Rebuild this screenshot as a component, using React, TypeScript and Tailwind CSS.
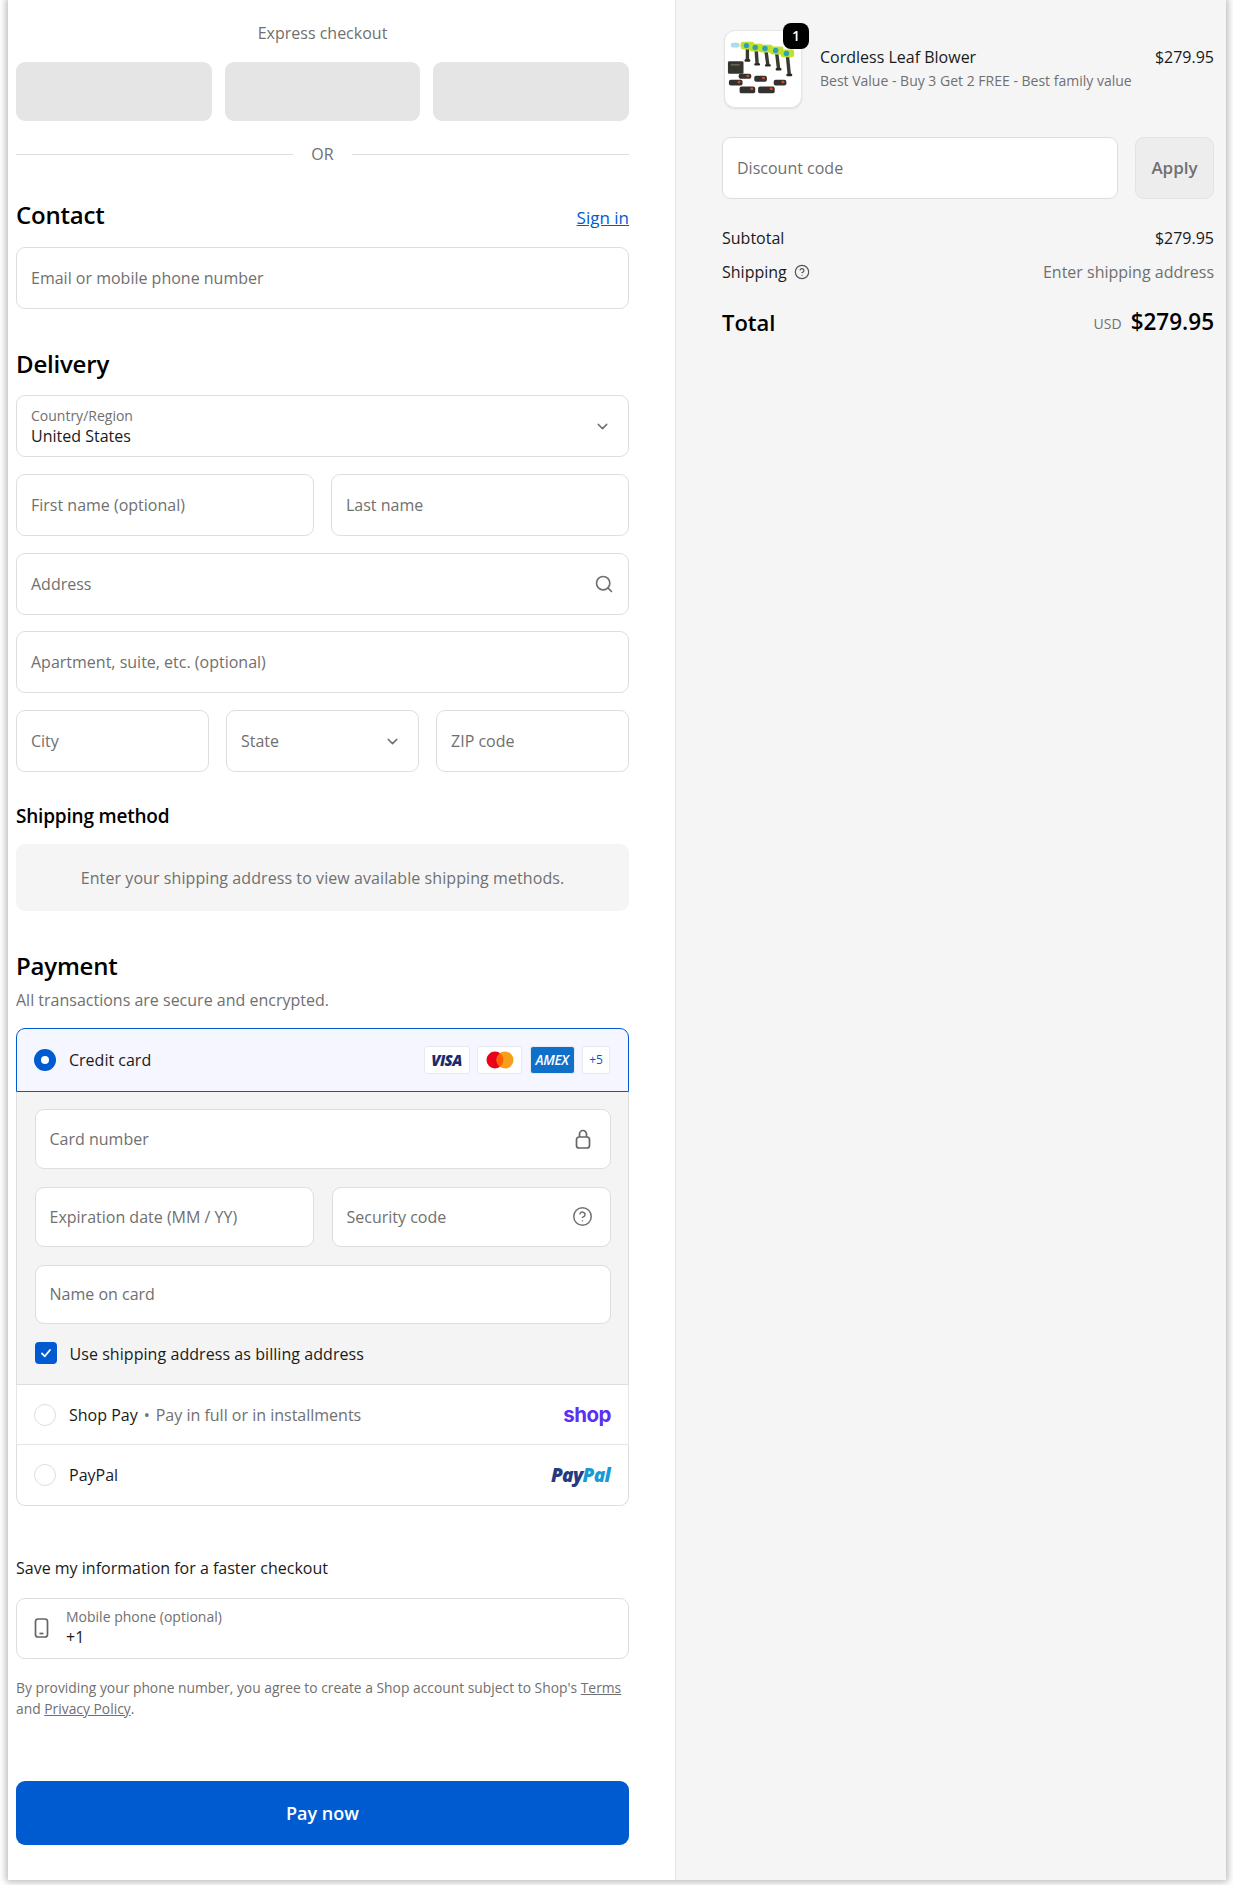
import React from 'react';
import { ChevronDown, Search, CircleHelp } from 'lucide-react';

const fieldBase =
	'flex items-center justify-between rounded-[9px] border border-[#dedede] bg-white text-[#707070]';

function Field({
	label,
	className,
	icon,
}: {
	label: string;
	className: string;
	icon?: React.ReactNode;
}) {
	return (
		<div className={`${fieldBase} ${className}`}>
			<span>{label}</span>
			{icon}
		</div>
	);
}

function Heading({ children }: { children: React.ReactNode }) {
	return (
		<h2 className="h-[30px] text-[24px] leading-[28px] font-semibold tracking-[-0.2px] text-black">
			{children}
		</h2>
	);
}

function Radio() {
	return (
		<span className="h-[22px] w-[22px] shrink-0 rounded-full border border-[#dedede] bg-white" />
	);
}

function CardBadge({
	className,
	children,
}: {
	className: string;
	children: React.ReactNode;
}) {
	return (
		<span
			className={`flex h-[28px] items-center justify-center rounded-[3px] border border-[#e8eaf2] ${className}`}
		>
			{children}
		</span>
	);
}

function LockIcon() {
	return (
		<svg width="18" height="20" viewBox="0 0 18 20" fill="none" stroke="#666666" strokeWidth="1.7">
			<rect x="2.5" y="8" width="13" height="11" rx="2.6" />
			<path d="M5.5 8V5a3.5 3.5 0 0 1 7 0v3" />
		</svg>
	);
}

function PhoneIcon() {
	return (
		<svg width="15" height="20" viewBox="0 0 15 20" fill="none" stroke="#666666" strokeWidth="1.7">
			<rect x="1.5" y="1" width="12" height="18" rx="2.6" />
			<path d="M5.5 15.5h4" />
		</svg>
	);
}

const drills = [
	{ hx: 23, hy: 17, bx: 23, by: 30 },
	{ hx: 32, hy: 19, bx: 33, by: 34 },
	{ hx: 42, hy: 20, bx: 44, by: 35 },
	{ hx: 53, hy: 22, bx: 55, by: 39 },
	{ hx: 64, hy: 25, bx: 66, by: 45 },
];

const batteries = [
	[14, 44, 13, 5],
	[30, 46, 13, 6],
	[50, 50, 13, 6],
	[4, 50, 14, 6],
	[15, 57, 16, 7],
	[34, 57, 17, 7],
];

// rough drawing of the product photo: five drills, a case and batteries
function ProductImage() {
	return (
		<svg width="76" height="76" viewBox="0 0 78 78" className="blur-[0.4px]">
			<rect x="6" y="12" width="9" height="5" rx="2" fill="#a9dcec" />
			{drills.map((d) => (
				<g key={d.hx}>
					<path d={`M${d.hx} ${d.hy}L${d.bx} ${d.by}`} stroke="#3a3a32" strokeWidth="3.5" />
					<rect x={d.bx - 3} y={d.by - 1} width="6" height="2.5" rx="1" fill="#2a2a24" />
					<rect x={d.hx - 7} y={d.hy - 6} width="14" height="8" rx="2.5" fill="#bfe02c" />
					<circle cx={d.hx - 1} cy={d.hy - 2} r="2.8" fill="#2f9fb4" />
				</g>
			))}
			<rect x="3" y="31" width="16" height="13" rx="1.5" fill="#35342f" />
			<rect x="6" y="34" width="9" height="1.5" fill="#6e6a4e" />
			{batteries.map(([x, y, w, h]) => (
				<g key={`${x}-${y}`}>
					<rect x={x} y={y} width={w} height={h} rx="2" fill="#33322f" />
					<rect x={x + w - 5} y={y + 1} width="3" height="2.5" rx="1" fill="#d34c2a" />
				</g>
			))}
		</svg>
	);
}

export default function App() {
	return (
		<div className="h-[1885px] w-full bg-white pr-[7px] pb-[5px] pl-[8px] font-['Open_Sans','Liberation_Sans',sans-serif] text-[16px] leading-[24px] text-[#1a1a1a]">
			<div className="flex h-[1880px] bg-white shadow-[0_0_7px_2px_rgba(0,0,0,0.28)]">
				{/* left column */}
				<div className="w-[668px] shrink-0 border-r border-[#e6e6e6] pt-[21px] pl-[8px]">
					<div className="w-[613px]">
						<p className="h-[24px] text-center text-[#707070]">Express checkout</p>
						<div className="mt-[17px] grid grid-cols-3 gap-[13px]">
							<div className="h-[59px] rounded-[9px] bg-[#e5e5e5]" />
							<div className="h-[59px] rounded-[9px] bg-[#e5e5e5]" />
							<div className="h-[59px] rounded-[9px] bg-[#e5e5e5]" />
						</div>
						<div className="mt-[21px] flex h-[24px] items-center justify-between text-[#707070]">
							<span className="h-px w-[277px] bg-[#dedede]" />
							<span>OR</span>
							<span className="h-px w-[277px] bg-[#dedede]" />
						</div>

						<div className="mt-[35px] flex items-center justify-between">
							<Heading>Contact</Heading>
							<a className="mt-[4px] text-[17px] text-[#005bd1] underline">Sign in</a>
						</div>
						<Field label="Email or mobile phone number" className="mt-[16px] h-[62px] px-[14px]" />

						<div className="mt-[41px]">
							<Heading>Delivery</Heading>
						</div>
						<div className="mt-[15px] flex flex-col gap-[16.75px]">
							<div className={`${fieldBase} h-[62px] pr-[17px] pl-[14px]`}>
								<div className="flex flex-col">
									<span className="text-[14px] leading-[19px]">Country/Region</span>
									<span className="leading-[22px] text-[#1a1a1a]">United States</span>
								</div>
								<ChevronDown size={17} strokeWidth={2} />
							</div>
							<div className="grid grid-cols-2 gap-[17px]">
								<Field label="First name (optional)" className="h-[62px] px-[14px]" />
								<Field label="Last name" className="h-[62px] px-[14px]" />
							</div>
							<Field
								label="Address"
								className="h-[62px] pr-[14px] pl-[14px]"
								icon={<Search size={20} strokeWidth={2} />}
							/>
							<Field label="Apartment, suite, etc. (optional)" className="h-[62px] px-[14px]" />
							<div className="grid grid-cols-3 gap-[17px]">
								<Field label="City" className="h-[62px] px-[14px]" />
								<Field
									label="State"
									className="h-[62px] pr-[17px] pl-[14px]"
									icon={<ChevronDown size={17} strokeWidth={2} />}
								/>
								<Field label="ZIP code" className="h-[62px] px-[14px]" />
							</div>
						</div>

						<h3 className="mt-[32px] h-[26px] text-[19px] leading-[24px] font-semibold tracking-[-0.2px] text-black">
							Shipping method
						</h3>
						<div className="mt-[14px] flex h-[67px] items-center justify-center rounded-[9px] bg-[#f5f5f5] tracking-[0.08px] text-[#707070]">
							Enter your shipping address to view available shipping methods.
						</div>

						<div className="mt-[41px]">
							<Heading>Payment</Heading>
						</div>
						<p className="mt-[6px] text-[#707070]">All transactions are secure and encrypted.</p>

						{/* payment methods */}
						<div className="mt-[16px]">
							<div className="flex h-[64px] items-center rounded-t-[9px] border border-[#005bd1] bg-[#f5f6ff] pr-[18px] pl-[17px]">
								<span className="flex h-[22px] w-[22px] items-center justify-center rounded-full bg-[#005bd1]">
									<span className="h-[8px] w-[8px] rounded-full bg-white" />
								</span>
								<span className="ml-[13px]">Credit card</span>
								<div className="ml-auto flex gap-[7.5px]">
									<CardBadge className="w-[46px] bg-white">
										<span className="text-[15px] font-extrabold tracking-[-0.6px] text-[#1a2b6d] italic">
											VISA
										</span>
									</CardBadge>
									<CardBadge className="w-[45px] bg-white">
										<svg width="28" height="18" viewBox="0 0 28 18">
											<circle cx="9" cy="9" r="8.5" fill="#eb001b" />
											<circle cx="19" cy="9" r="8.5" fill="#f79e1b" />
											<path d="M14 2.2a8.5 8.5 0 0 1 0 13.6a8.5 8.5 0 0 1 0-13.6z" fill="#ff5f00" />
										</svg>
									</CardBadge>
									<CardBadge className="w-[45px] border-[#0f70c9] bg-[#0f70c9]">
										<span className="text-[13.5px] font-semibold tracking-[-0.4px] text-white italic">
											AMEX
										</span>
									</CardBadge>
									<CardBadge className="w-[28px] bg-white">
										<span className="text-[12px] text-[#005bd1]">+5</span>
									</CardBadge>
								</div>
							</div>
							<div className="border-x border-b border-[#dedede] bg-[#f4f4f4] px-[17.5px] pt-[17px]">
								<div className="flex flex-col gap-[18px]">
									<Field
										label="Card number"
										className="h-[59.5px] pr-[18px] pl-[14px]"
										icon={<LockIcon />}
									/>
									<div className="grid grid-cols-2 gap-[18px]">
										<Field label="Expiration date (MM / YY)" className="h-[60px] px-[14px]" />
										<Field
											label="Security code"
											className="h-[60px] pr-[17px] pl-[14px]"
											icon={<CircleHelp size={21} strokeWidth={1.7} />}
										/>
									</div>
									<Field label="Name on card" className="h-[59.5px] px-[14px]" />
								</div>
								<div className="flex h-[60px] items-center pb-[2px]">
									<span className="flex h-[22px] w-[22px] items-center justify-center rounded-[4px] bg-[#005bd1]">
										<svg width="14" height="14" viewBox="0 0 14 14" fill="none" stroke="white" strokeWidth="1.8" strokeLinecap="round" strokeLinejoin="round">
											<path d="M3 7.5l2.8 2.8L11 4" />
										</svg>
									</span>
									<span className="mt-[2px] ml-[13px] tracking-[0.06px]">
										Use shipping address as billing address
									</span>
								</div>
							</div>
							<div className="flex h-[60px] items-center border-x border-b border-[#e6e6e6] pr-[17px] pl-[17px]">
								<Radio />
								<span className="ml-[13px]">Shop Pay</span>
								<span className="ml-[6px] text-[#707070]">•</span>
								<span className="ml-[6px] text-[#707070]">Pay in full or in installments</span>
								<span className="ml-auto font-['Inter',sans-serif] text-[20.5px] leading-[24px] font-bold tracking-[-0.5px] text-[#5a31f4]">
									shop
								</span>
							</div>
							<div className="flex h-[60.5px] items-center rounded-b-[9px] border-x border-b border-[#dedede] pr-[18px] pl-[17px]">
								<Radio />
								<span className="ml-[13px]">PayPal</span>
								<span className="ml-auto text-[19px] font-extrabold tracking-[-0.7px] italic">
									<span className="text-[#253b80]">Pay</span>
									<span className="text-[#179bd7]">Pal</span>
								</span>
							</div>
						</div>

						<p className="mt-[50.5px]">Save my information for a faster checkout</p>
						<div className="mt-[18px] flex h-[60.5px] items-center rounded-[9px] border border-[#dedede] bg-white pl-[17px]">
							<PhoneIcon />
							<div className="ml-[17px] flex flex-col">
								<span className="text-[14px] leading-[18px] text-[#707070]">
									Mobile phone (optional)
								</span>
								<span className="leading-[23px]">+1</span>
							</div>
						</div>
						<p className="mt-[18px] text-[13.85px] leading-[21px] text-[#707070]">
							By providing your phone number, you agree to create a Shop account subject to Shop's{' '}
							<a className="underline">Terms</a>
							<br />
							and <a className="underline">Privacy Policy</a>.
						</p>
						<button className="mt-[62.5px] flex h-[64px] w-full items-center justify-center rounded-[9px] bg-[#005bd1] text-[18px] font-semibold text-white">
							Pay now
						</button>
					</div>
				</div>

				{/* order summary */}
				<div className="flex-1 bg-[#f5f5f5] pt-[23px] pr-[12px] pl-[46px]">
					<div className="flex items-start">
						<div className="relative mt-[7px] ml-[2px] flex h-[78px] w-[78px] shrink-0 items-center justify-center rounded-[11px] border border-[#e6e6e6] bg-white shadow-[0_1px_2px_rgba(0,0,0,0.1)]">
							<ProductImage />
							<span className="absolute -top-[8px] -right-[8px] flex h-[26px] w-[26px] items-center justify-center rounded-[8px] bg-black text-[14px] font-semibold text-white">
								1
							</span>
						</div>
						<div className="mt-[22px] ml-[18px] flex-1">
							<div className="flex justify-between">
								<span>Cordless Leaf Blower</span>
								<span>$279.95</span>
							</div>
							<p className="text-[14px] leading-[23px] text-[#707070]">
								Best Value - Buy 3 Get 2 FREE - Best family value
							</p>
						</div>
					</div>

					<div className="mt-[29px] flex gap-[17px]">
						<div className={`${fieldBase} h-[62px] w-[396px] px-[14px]`}>Discount code</div>
						<div className="flex h-[62px] flex-1 items-center justify-center rounded-[9px] border border-[#e3e3e3] bg-[#ededed] text-[17px] font-semibold text-[#707070]">
							Apply
						</div>
					</div>

					<div className="mt-[27px] flex justify-between">
						<span>Subtotal</span>
						<span>$279.95</span>
					</div>
					<div className="mt-[10px] flex justify-between">
						<span className="flex items-center gap-[7px]">
							Shipping
							<CircleHelp size={16} strokeWidth={1.8} className="text-[#555555]" />
						</span>
						<span className="text-[#707070]">Enter shipping address</span>
					</div>
					<div className="mt-[23px] flex items-center justify-between">
						<span className="text-[22px] leading-[30px] font-semibold text-black">Total</span>
						<span className="flex items-center gap-[9px]">
							<span className="mt-[4px] text-[14px] text-[#707070]">USD</span>
							<span className="text-[22.5px] leading-[30px] font-semibold text-black">$279.95</span>
						</span>
					</div>
				</div>
			</div>
		</div>
	);
}
